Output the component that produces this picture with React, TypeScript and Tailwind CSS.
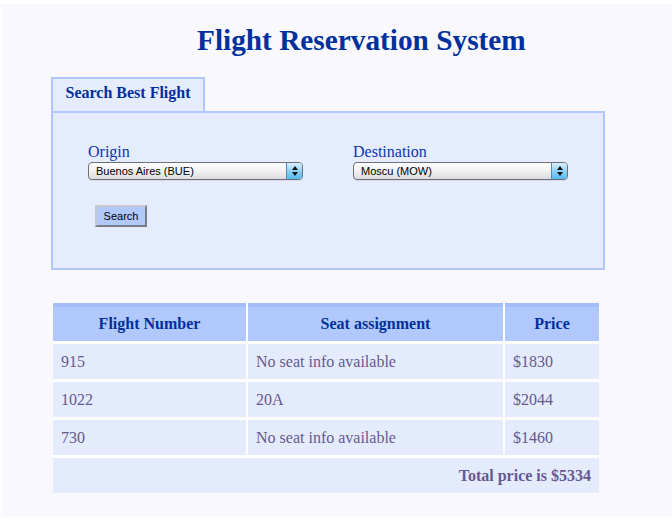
import { Fragment } from "react";

const serif = { fontFamily: '"Liberation Serif", "Times New Roman", serif' };

function FakeSelect({ value }: { value: string }) {
  return (
    <div className="flex h-[18px] w-[215px] overflow-hidden rounded-[4px] border border-[#6f6f78] bg-gradient-to-b from-white via-[#f1f1f1] to-[#dcdcdc] shadow-[0_1px_0_rgba(0,0,0,0.08)]">
      <span
        className="flex-1 pl-[7px] text-[11px] leading-[16px] text-black"
        style={{ fontFamily: '"Liberation Sans", Arial, sans-serif' }}
      >
        {value}
      </span>
      <span className="flex w-[16px] flex-col items-center justify-center gap-[2px] border-l border-[#5a86b8] bg-gradient-to-b from-[#d6effc] via-[#8fd3f6] to-[#4fb8ee]">
        <svg width="6" height="4" viewBox="0 0 6 4">
          <path d="M3 0 L6 4 L0 4 Z" fill="#111" />
        </svg>
        <svg width="6" height="4" viewBox="0 0 6 4">
          <path d="M0 0 L6 0 L3 4 Z" fill="#111" />
        </svg>
      </span>
    </div>
  );
}

const rows = [
  { n: "915", seat: "No seat info available", price: "$1830" },
  { n: "1022", seat: "20A", price: "$2044" },
  { n: "730", seat: "No seat info available", price: "$1460" },
];

export default function App() {
  return (
    <div className="min-h-[522px] bg-white pt-[4px] pl-[1px]">
      <div className="h-[513px] bg-[#f8f8fe]" style={serif}>
        <h1 className="pt-[19px] pl-[196px] text-[29.3px] font-bold leading-[34px] text-[#00309c]">
          Flight Reservation System
        </h1>

        <div className="mt-[20px] ml-[50px] w-[554px]">
          <div className="flex h-[34px] w-[154px] items-center justify-center border-2 border-b-0 border-[#b0c8fb] bg-[#e5ecfe] pb-[4px] text-[16px] font-bold text-[#00309c]">
            Search Best Flight
          </div>
          <div className="h-[159px] border-2 border-[#b0c8fb] bg-[#e5ecfe] pt-[29px] pl-[35px]">
            <div className="flex gap-[50px]">
              <label className="flex flex-col">
                <span className="text-[16px] leading-[20px] text-[#0a36b0]">Origin</span>
                <FakeSelect value="Buenos Aires (BUE)" />
              </label>
              <label className="flex flex-col">
                <span className="text-[16px] leading-[20px] text-[#0a36b0]">Destination</span>
                <FakeSelect value="Moscu (MOW)" />
              </label>
            </div>
            <button
              className="mt-[25px] ml-[7px] h-[22px] w-[52px] border-2 border-t-[#c8c8cc] border-l-[#c8c8cc] border-r-[#7c7c84] border-b-[#7c7c84] bg-[#b0c8fb] text-[11px] text-black"
              style={{ fontFamily: '"Liberation Sans", Arial, sans-serif' }}
            >
              Search
            </button>
          </div>
        </div>

        <div className="mt-[33px] ml-[52px] grid w-[546px] grid-cols-[193px_255px_94px] gap-x-[2px] gap-y-[3px] bg-white text-[16px]">
          {["Flight Number", "Seat assignment", "Price"].map((h) => (
            <div
              key={h}
              className="flex h-[38px] items-center justify-center border-t-[4px] border-[#a2bdf8] bg-[#b0c8fb] font-bold text-[#00309c]"
            >
              {h}
            </div>
          ))}
          {rows.map((r) => (
            <Fragment key={r.n}>
              <div className="flex h-[35px] items-center bg-[#e4ebfd] pl-[8px] text-[#66598f]">{r.n}</div>
              <div className="flex h-[35px] items-center bg-[#e4ebfd] pl-[8px] text-[#66598f]">{r.seat}</div>
              <div className="flex h-[35px] items-center bg-[#e4ebfd] pl-[8px] text-[#66598f]">{r.price}</div>
            </Fragment>
          ))}
          <div className="col-span-3 flex h-[35px] items-center justify-end bg-[#e4ebfd] pr-[8px] font-bold text-[#66598f]">
            Total price is $5334
          </div>
        </div>
      </div>
    </div>
  );
}
